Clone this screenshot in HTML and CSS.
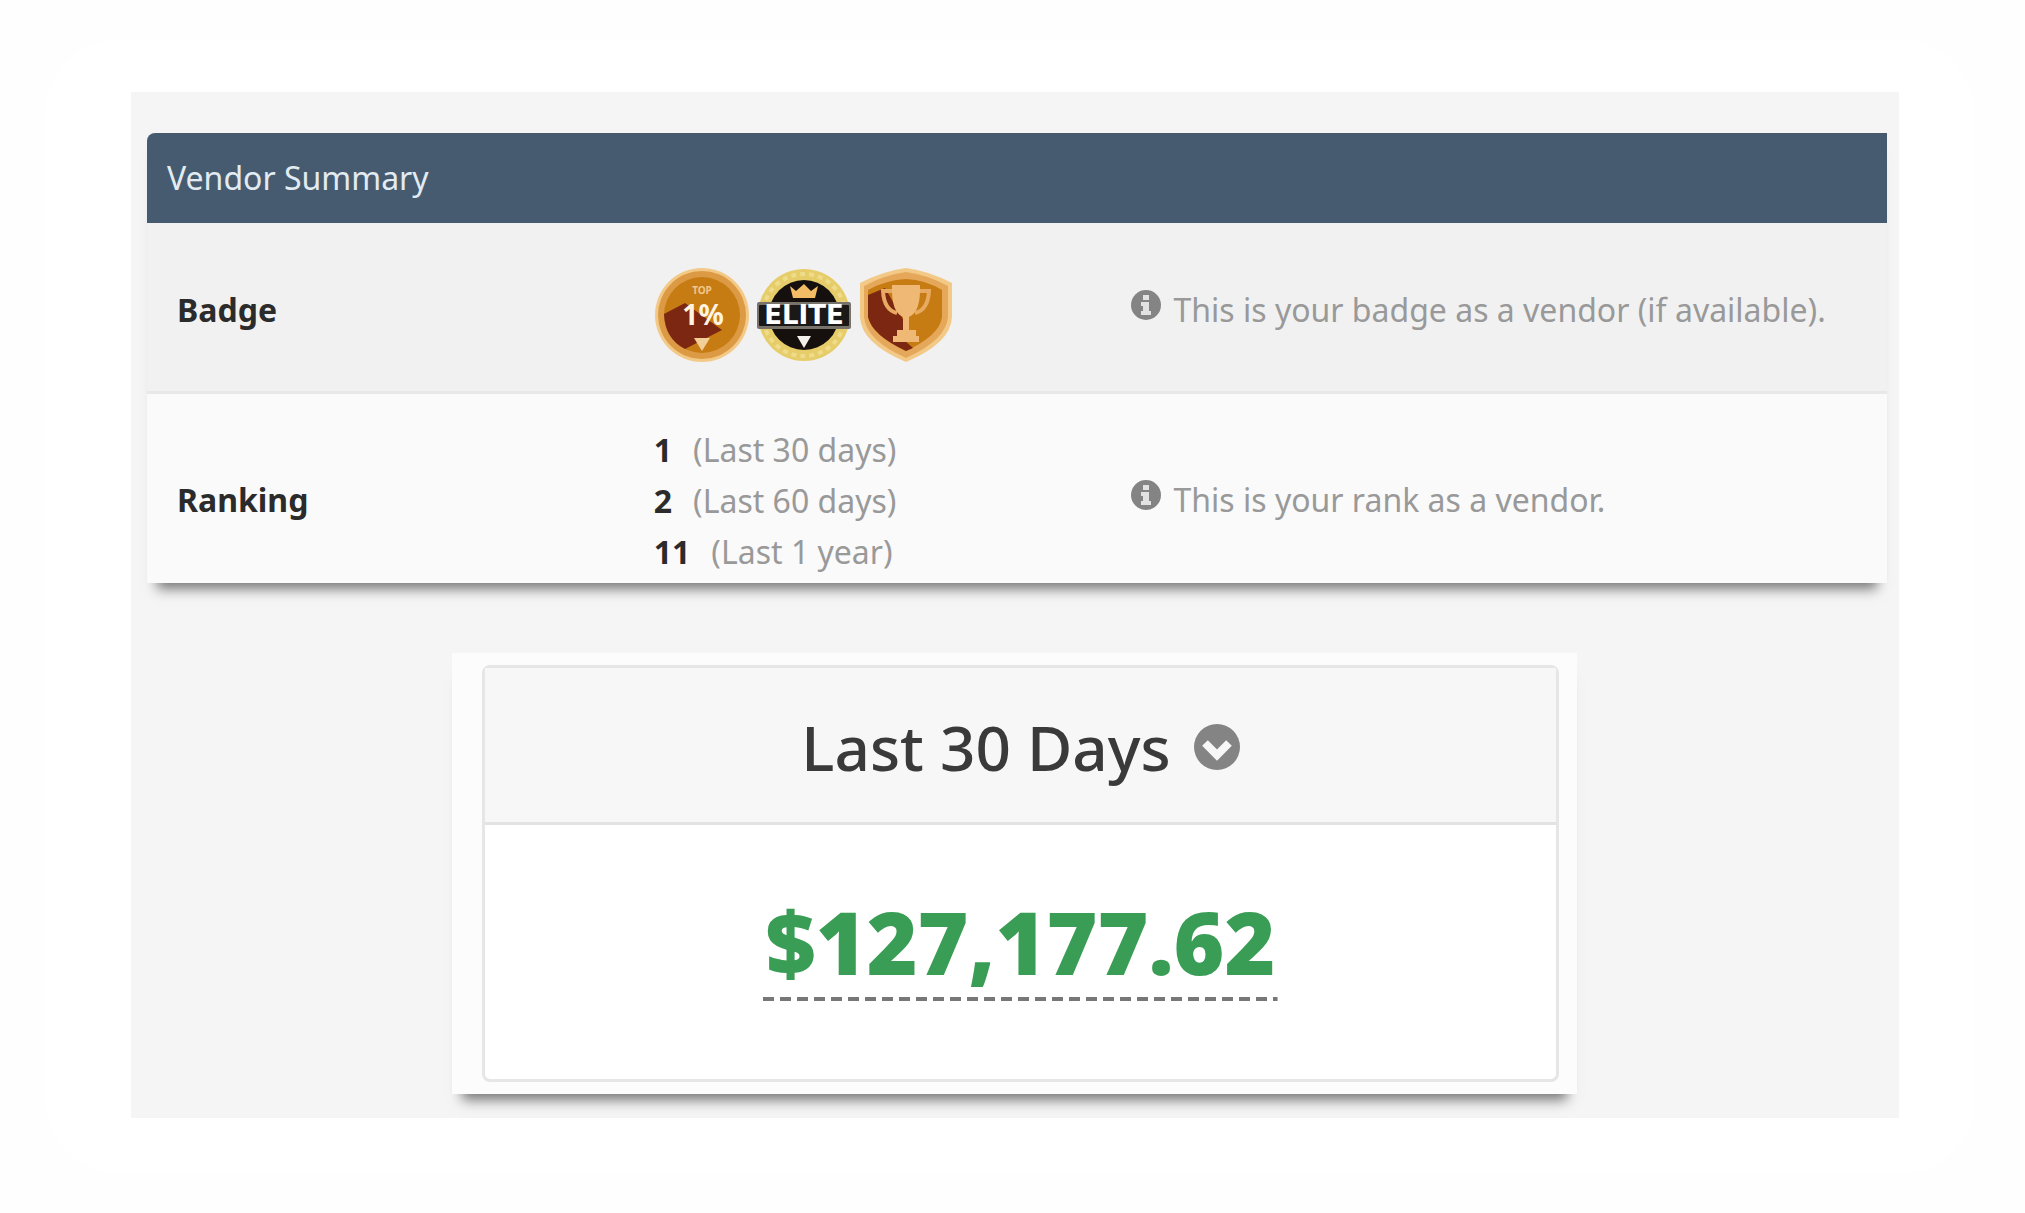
FILE: index.html
```html
<!DOCTYPE html>
<html lang="en">
<head>
<meta charset="utf-8">
<meta name="viewport" content="width=device-width, initial-scale=1">
<title>Vendor Summary</title>
<link rel="stylesheet" href="styles.css">
</head>
<body>
<svg class="sprite" aria-hidden="true">
  <symbol id="info" viewBox="0 0 30 30">
    <circle cx="15" cy="15" r="15" fill="#848484"/>
    <path d="M12 5h6v5h-6zM10 12h8v9h2v4H10v-4h2v-5h-2z" fill="#e2e2e2"/>
  </symbol>
</svg>
<main class="frame">
  <div class="panel">
    <section class="summary">
      <h1 class="summary-title">Vendor Summary</h1>
      <table class="summary-table">
        <tbody>
          <tr class="row-badge">
            <th scope="row">Badge</th>
            <td>
              <div class="badges">
                <svg class="badge" viewBox="0 0 96 96" role="img" aria-label="Top 1%">
                  <circle cx="48" cy="48" r="47" fill="#f3c987"/>
                  <circle cx="48" cy="48" r="44" fill="#dd9a45"/>
                  <circle cx="48" cy="48" r="38" fill="#c67c12"/>
                  <path d="M10 47L31 36L68 63L31 82Q11 72 10 47z" fill="#7c2712"/>
                  <text x="48" y="27" class="badge-top">TOP</text>
                  <text x="49" y="58" class="badge-percent">1%</text>
                  <path d="M40 71h16l-8 13z" fill="#f3cf98"/>
                </svg>
                <svg class="badge" viewBox="0 0 96 96" role="img" aria-label="Elite">
                  <circle cx="48" cy="48" r="46" fill="#e6cd69"/>
                  <circle cx="48" cy="48" r="41" fill="none" stroke="#efdc8b" stroke-width="4" stroke-dasharray="5 4"/>
                  <circle cx="48" cy="48" r="35" fill="#15100d"/>
                  <path d="M34 19l6 5 8-7 7 7 7-5-3 12H37z" fill="#f2bd65"/>
                  <rect x="1" y="35" width="94" height="27" rx="2" fill="#77736b"/>
                  <rect x="3" y="38" width="90" height="21" rx="1" fill="#1b1917"/>
                  <text x="48" y="57" class="badge-elite">ELITE</text>
                  <path d="M41 69h14l-7 12z" fill="#f2f0ea"/>
                </svg>
                <svg class="badge" viewBox="0 0 96 96" role="img" aria-label="Trophy">
                  <path d="M48 1Q71 4 94 16V50Q93 76 48 95Q3 76 2 50V16Q25 4 48 1z" fill="#f3c987"/>
                  <path d="M48 5Q70 8 90 19V50Q88 73 48 91Q8 73 6 50V19Q26 8 48 5z" fill="#e5a85a"/>
                  <path d="M48 12Q68 13 84 23V50Q82 68 48 84Q14 68 10 50V23Q28 13 48 12z" fill="#c67c12"/>
                  <path d="M10 28L27 21L46 54V73L55 81L48 84Q14 68 10 50z" fill="#7c2712"/>
                  <path d="M34 24H25Q26 43 39 46M62 24H71Q70 43 57 46" fill="none" stroke="#e8aa62" stroke-width="4"/>
                  <path d="M34 18H62Q63 45 51 50V63H58V69H61V75H35V69H39V63H45V50Q33 45 34 18z" fill="#efb975"/>
                </svg>
              </div>
            </td>
            <td class="note"><svg class="info" aria-hidden="true"><use href="#info"/></svg>This is your badge as a vendor (if available).</td>
          </tr>
          <tr class="row-ranking">
            <th scope="row">Ranking</th>
            <td>
              <ul class="ranks">
                <li><b>1</b><span>(Last 30 days)</span></li>
                <li><b>2</b><span>(Last 60 days)</span></li>
                <li><b>11</b><span>(Last 1 year)</span></li>
              </ul>
            </td>
            <td class="note"><svg class="info" aria-hidden="true"><use href="#info"/></svg>This is your rank as a vendor.</td>
          </tr>
        </tbody>
      </table>
    </section>
    <section class="sales">
      <div class="sales-card">
        <div class="sales-head">
          <h2 class="sales-title">Last 30 Days</h2>
          <button class="period" type="button" aria-label="Choose period">
            <svg viewBox="0 0 46 46" aria-hidden="true">
              <circle cx="23" cy="23" r="23" fill="#848484"/>
              <path d="M11 19l12 12 12-12" fill="none" stroke="#f7f7f7" stroke-width="8"/>
            </svg>
          </button>
        </div>
        <div class="sales-body"><span class="amount">$127,177.62</span></div>
      </div>
    </section>
  </div>
</main>
</body>
</html>
```
FILE: styles.css
```css
* {
  box-sizing: border-box;
}

body {
  margin: 0;
  padding: 39px 50px 40px 45px;
  background: #fefefe;
  color: #2b2b2b;
  font: 32px/48px "Noto Sans", "Open Sans", sans-serif;
}

h1, h2, ul {
  margin: 0;
  padding: 0;
}

.sprite {
  position: absolute;
  width: 0;
  height: 0;
}

.frame {
  padding: 53px 76px 56px 86px;
  border-radius: 76px;
  background: #fff;
}

.panel {
  padding: 41px 12px 24px 16px;
  background: #f5f5f5;
}

/* Vendor summary */
.summary {
  border-radius: 8px 0 0 0;
  background: #fafafa;
  box-shadow: 0 16px 12px -10px #777;
}

.summary-title {
  padding: 20px;
  border-radius: 8px 0 0 0;
  background: #465b70;
  color: #e3ebf2;
  font-size: 32px;
  font-weight: 400;
  line-height: 50px;
}

.summary-table {
  width: 100%;
  border-collapse: collapse;
  table-layout: fixed;
}

.summary-table th,
.summary-table td {
  width: 27.4%;
  padding: 6px 0 0 30px;
  text-align: left;
  vertical-align: middle;
}

.summary-table .note {
  width: auto;
  color: #999;
  white-space: nowrap;
}

.row-badge {
  height: 169px;
  border-bottom: 3px solid #e8e8e8;
  background: #f1f1f1;
}

.row-ranking {
  height: 191px;
}

.summary-table .row-ranking td,
.summary-table .row-ranking th {
  padding-top: 24px;
}

.badges {
  display: flex;
  gap: 6px;
  padding-top: 10px;
}

.badge {
  width: 96px;
  height: 96px;
}

.badge text {
  font-family: "Noto Sans", sans-serif;
  font-weight: 700;
  text-anchor: middle;
}

.badge-top {
  fill: #f0c78d;
  font-size: 10px;
}

.badge-percent {
  fill: #fff4e2;
  font-size: 28px;
}

.badge .badge-elite {
  fill: #fff;
  font-family: "DejaVu Sans", sans-serif;
  font-size: 26px;
}

.info {
  width: 30px;
  height: 30px;
  margin-right: 13px;
  vertical-align: 2px;
}

.ranks {
  list-style: none;
}

.ranks li {
  display: flex;
  gap: 21px;
  line-height: 51px;
}

.ranks span {
  color: #999;
}

/* Sales card */
.sales {
  margin: 70px 310px 0 305px;
  padding: 12px 18px 12px 30px;
  background: #fcfcfc;
  box-shadow: 0 16px 12px -10px #777;
}

.sales-card {
  border: 3px solid #e6e6e6;
  border-radius: 8px;
  background: #fff;
}

.sales-head {
  display: flex;
  align-items: center;
  justify-content: center;
  gap: 23px;
  height: 157px;
  padding-top: 4px;
  border-bottom: 3px solid #e3e3e3;
  background: #f7f7f7;
}

.sales-title {
  color: #3a3a3a;
  font-size: 62px;
  font-weight: 500;
  line-height: 84px;
}

.period {
  width: 46px;
  height: 46px;
  padding: 0;
  border: 0;
  background: none;
}

.period svg {
  display: block;
}

.sales-body {
  display: flex;
  justify-content: center;
  padding: 60px 0 78px;
}

.amount {
  padding: 0 2px 4px;
  background: repeating-linear-gradient(90deg, #777 0 11px, transparent 11px 17px) bottom / 100% 4px no-repeat;
  color: #3a9d55;
  font-size: 87px;
  font-weight: 900;
  line-height: 112px;
}
```
